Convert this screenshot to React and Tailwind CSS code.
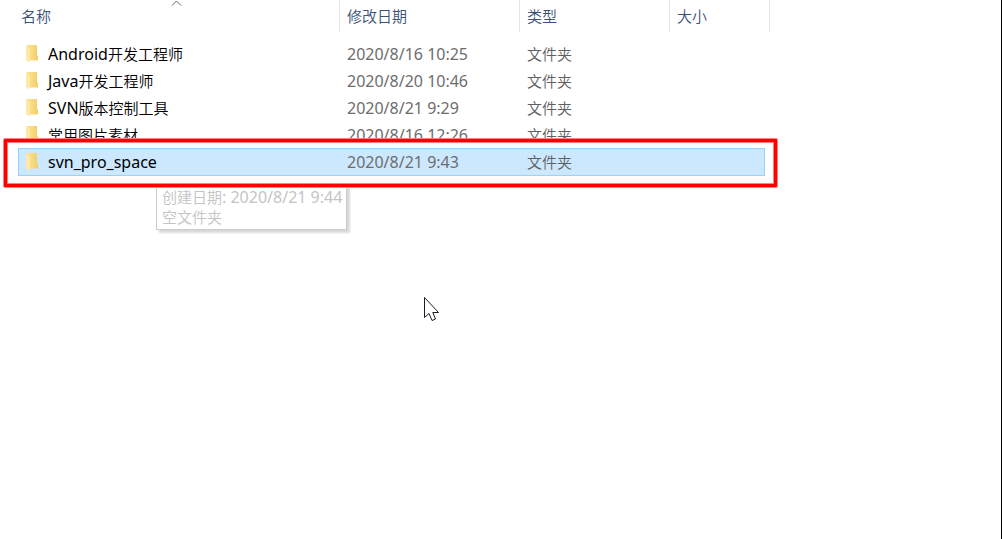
import React from "react";

const files = [
  { latin: "Android", cjk: "开发工程师", date: "2020/8/16 10:25" },
  { latin: "Java", cjk: "开发工程师", date: "2020/8/20 10:46" },
  { latin: "SVN", cjk: "版本控制工具", date: "2020/8/21 9:29" },
  { latin: "", cjk: "常用图片素材", date: "2020/8/16 12:26" },
  { latin: "svn_pro_space", cjk: "", date: "2020/8/21 9:43", selected: true },
];

function FolderIcon() {
  return (
    <svg width="14" height="18" viewBox="0 0 14 18" className="shrink-0" aria-hidden="true">
      <defs>
        <linearGradient id="folder-back" x1="0" x2="1" y1="0" y2="0">
          <stop offset="0" stopColor="#ffe79a" />
          <stop offset="1" stopColor="#f0cd69" />
        </linearGradient>
      </defs>
      <path d="M1 0H12V10L13 11V15.5H3V4Z" fill="url(#folder-back)" />
      <path d="M1 1L5 4V15L4 17.5L1 15Z" fill="#ffe9a3" />
    </svg>
  );
}

function SortMark() {
  return (
    <svg width="11" height="6" viewBox="0 0 11 6" className="absolute left-[153px] top-0" aria-hidden="true">
      <path d="M1 5.5L5.5 1L10 5.5" fill="none" stroke="#666" strokeWidth="1" />
    </svg>
  );
}

function Heading({ children, className, span, sorted }) {
  return (
    <th
      scope="col"
      colSpan={span}
      aria-sort={sorted ? "ascending" : undefined}
      className={`relative h-8 border-r border-[#e5e5e5] p-0 text-left ${className}`}
    >
      {sorted && <SortMark />}
      <button type="button" className="block w-full text-left text-[15px] font-[350] leading-8 text-[#3a5075]">
        {children}
      </button>
    </th>
  );
}

function FileRow({ file }) {
  const cell = file.selected
    ? "h-7 border-y border-[#99d1ff] bg-[#cce8ff] p-0"
    : "h-[27px] p-0";
  return (
    <tr aria-selected={Boolean(file.selected)}>
      <td className={`${cell} ${file.selected ? "border-l pl-[6px]" : "pl-[7px]"}`}>
        <div className="flex items-center gap-[9px] leading-5 text-black">
          <FolderIcon />
          <span className="whitespace-nowrap">
            {file.latin}
            {file.cjk && <span className="text-[15px] font-[350]">{file.cjk}</span>}
          </span>
        </div>
      </td>
      <td className={`${cell} pl-[7px] leading-5 text-[#6d6d6d]`}>{file.date}</td>
      <td className={`${cell} pl-[7px] text-[15px] font-[350] leading-5 text-[#606060]`}>文件夹</td>
      <td className={`${cell} ${file.selected ? "border-r" : ""}`}></td>
      <td className="p-0"></td>
    </tr>
  );
}

function Pointer() {
  return (
    <svg width="17" height="26" viewBox="0 0 17 26" className="absolute left-[423px] top-[296px]" aria-hidden="true">
      <path
        d="M1.5 1.5V21.5L6 17.5L9 24.5L12.5 23L9.8 16.5H15.5Z"
        fill="#fff"
        stroke="#1c1c28"
        strokeWidth="1"
      />
    </svg>
  );
}

export default function App() {
  return (
    <main className="relative min-h-screen border-r border-black bg-white font-['Noto_Sans','Noto_Sans_CJK_SC',sans-serif] text-base">
      <div className="relative pl-[18px]">
        <table className="w-[752px] table-fixed border-separate border-spacing-0">
          <colgroup>
            <col className="w-[322px]" />
            <col className="w-[180px]" />
            <col className="w-[150px]" />
            <col className="w-[95px]" />
            <col className="w-[5px]" />
          </colgroup>
          <thead>
            <tr>
              <Heading className="pl-[3px]" sorted>名称</Heading>
              <Heading className="pl-[7px]">修改日期</Heading>
              <Heading className="pl-[7px]">类型</Heading>
              <Heading className="pl-[7px]" span={2}>大小</Heading>
            </tr>
          </thead>
          <tbody>
            <tr aria-hidden="true">
              <td colSpan={5} className="h-2 p-0"></td>
            </tr>
            {files.map((file) => (
              <FileRow key={file.date} file={file} />
            ))}
          </tbody>
        </table>
        <div
          role="tooltip"
          className="absolute left-[156px] top-[184px] w-[191px] whitespace-nowrap border border-[#cbcbcb] bg-white pb-[2px] pl-[5px] pt-[2px] leading-5 text-[#c4c4c4] shadow-[3px_3px_2px_#d9d9d9]"
        >
          <p className="h-5">
            <span className="text-[15px] font-[350]">创建日期</span>: 2020/8/21 9:44
          </p>
          <p className="h-5 text-[15px] font-[350] leading-5">空文件夹</p>
        </div>
        <div className="pointer-events-none absolute left-[3px] top-[138px] h-[50px] w-[775px] rounded-[2px] border-5 border-[#ff8080]"></div>
        <div className="pointer-events-none absolute left-1 top-[139px] h-12 w-[773px] rounded-[1px] border-3 border-[#ff0000]"></div>
      </div>
      <Pointer />
    </main>
  );
}
